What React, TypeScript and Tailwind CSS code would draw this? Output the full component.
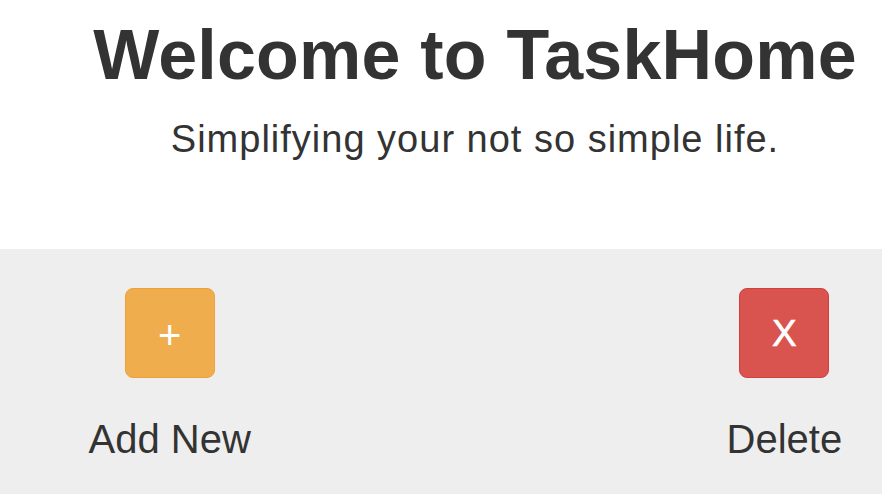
import React from 'react';

const actions = [
  { label: 'Add New', glyph: '+', box: 'bg-[#f0ad4e] border-[#eea236]', glyphClass: 'text-[40px] translate-y-[2px]' },
  { label: 'Delete', glyph: 'X', box: 'bg-[#d9534f] border-[#d43f3a]', glyphClass: 'text-[37px] [-webkit-text-stroke:0.6px_white]' },
];

const ActionButton = ({ label, glyph, box, glyphClass }: (typeof actions)[number]) => (
  <div className="flex flex-col items-center">
    <button
      type="button"
      className={`flex h-[90px] w-[90px] items-center justify-center rounded-[8px] border text-white ${box}`}
    >
      <span className={`leading-none ${glyphClass}`}>{glyph}</span>
    </button>
    <span className="mt-[37px] text-[40px] leading-[48px] text-[#333]">{label}</span>
  </div>
);

export default function App() {
  return (
    <div className="h-[494px] w-full overflow-hidden bg-white font-['Liberation_Sans',Arial,sans-serif]">
      <div className="w-[950px]">
        {/* Header */}
        <header className="flex h-[249px] flex-col items-center pt-[17px] text-[#333]">
          <h1 className="text-[70px] font-bold leading-[77px] tracking-[0.2px]">Welcome to TaskHome</h1>
          <p className="mt-[22px] text-[38px] leading-[46px] tracking-[1px]">
            Simplifying your not so simple life.
          </p>
        </header>

        {/* Actions */}
        <section className="grid h-[245px] grid-cols-3 bg-[#eee] pl-[16px] pr-[12px] pt-[39px]">
          <ActionButton {...actions[0]} />
          <div />
          <ActionButton {...actions[1]} />
        </section>
      </div>
    </div>
  );
}
